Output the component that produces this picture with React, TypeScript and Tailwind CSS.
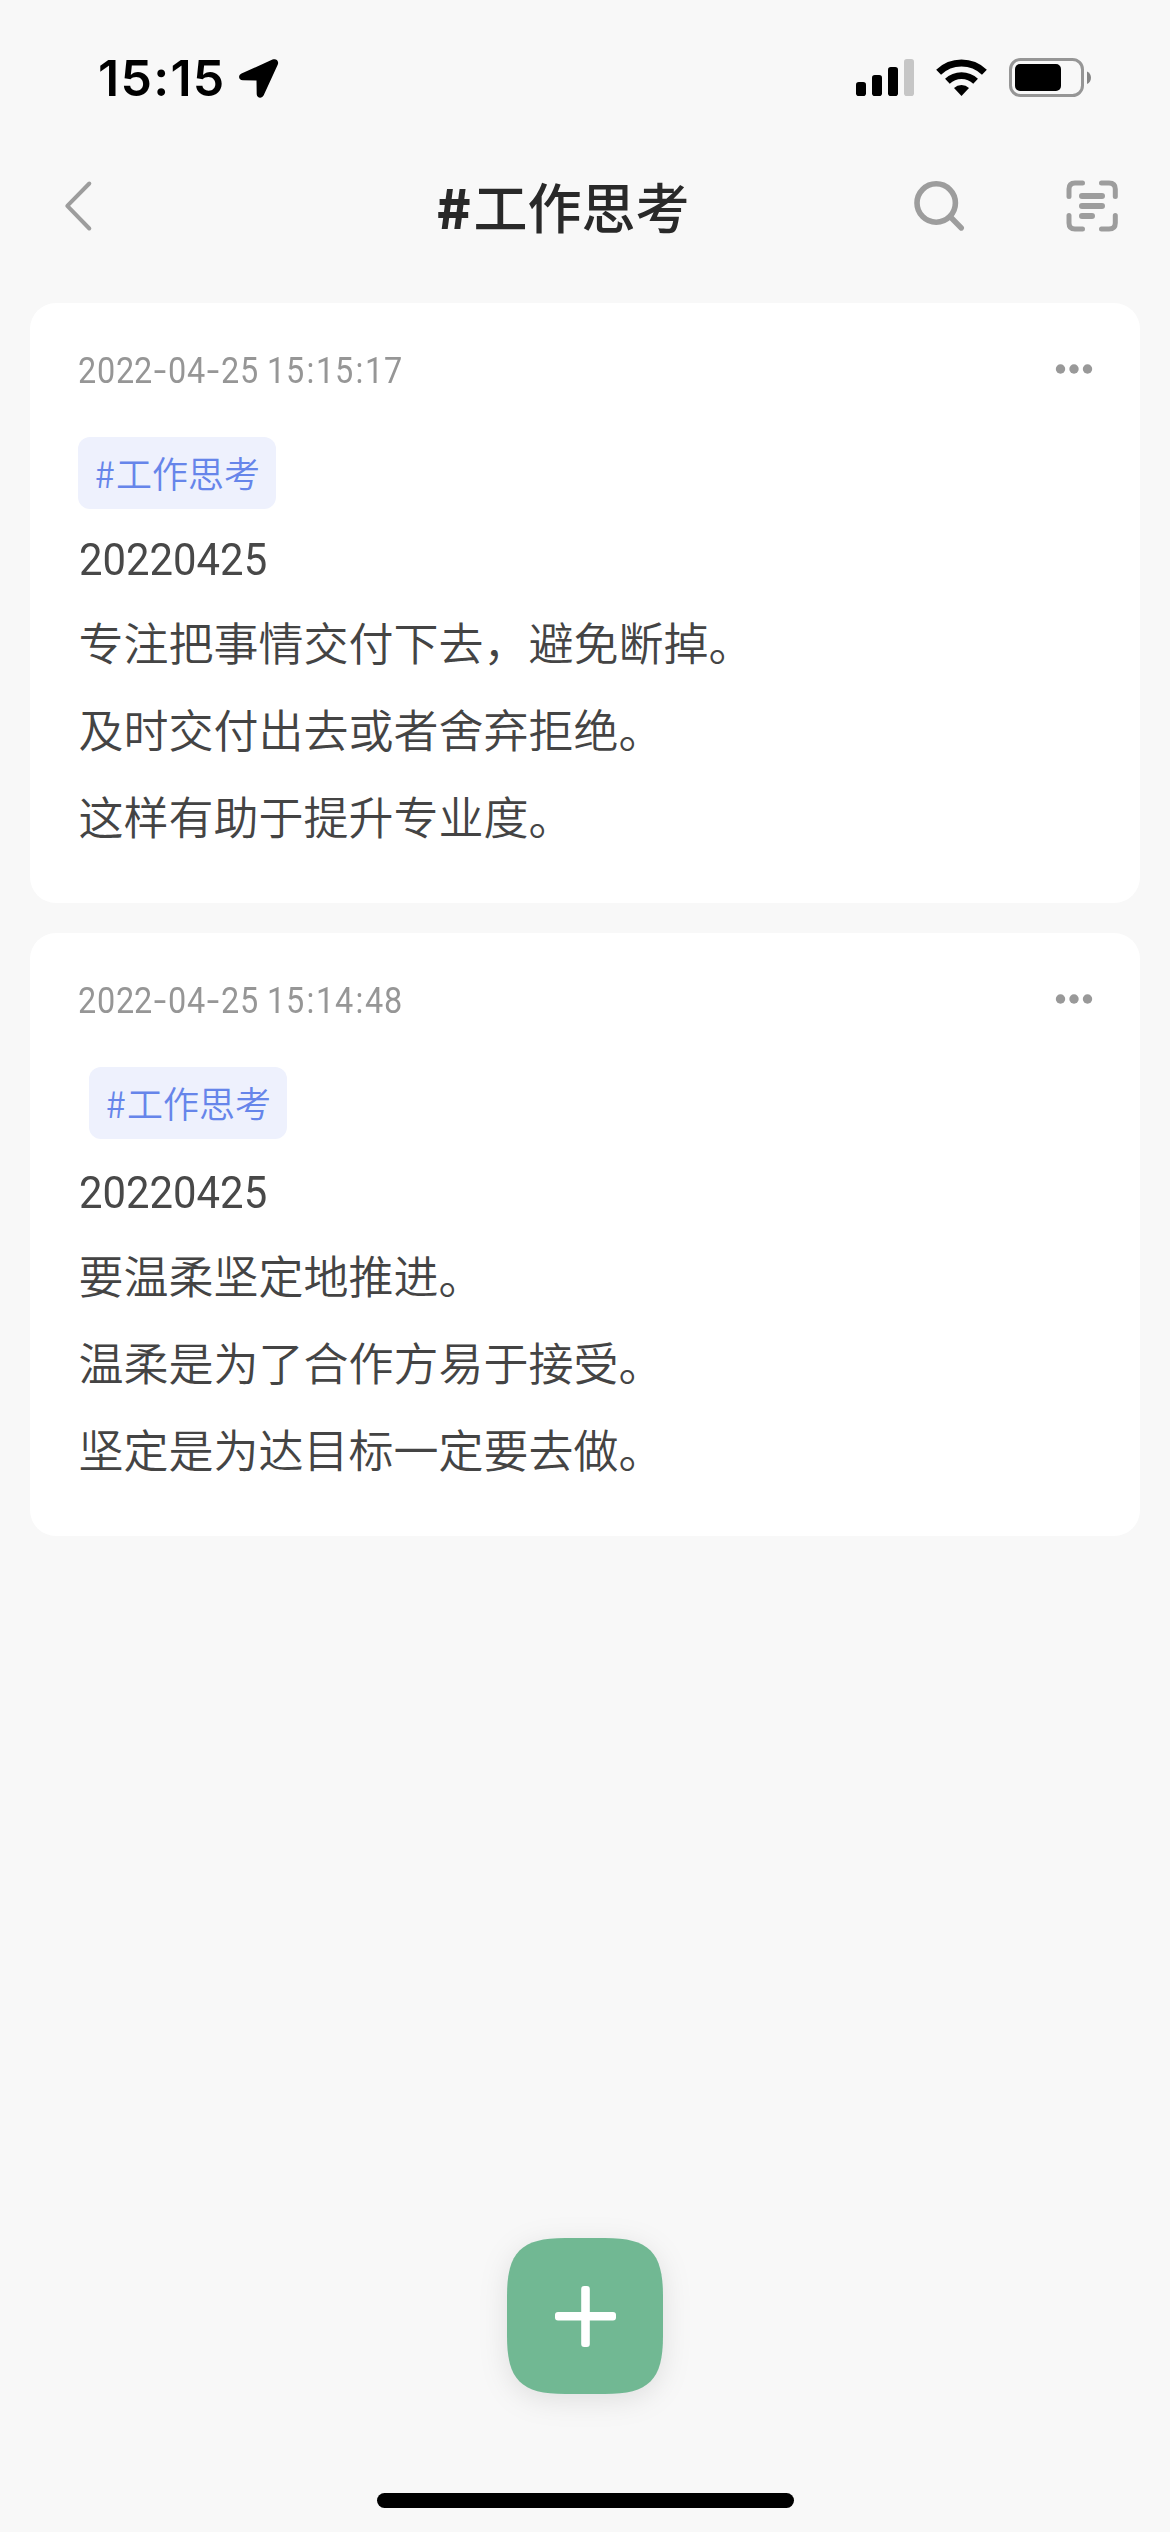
import React from "react";

const cjk = "font-['Noto_Sans_CJK_SC',sans-serif]";

function StatusBar() {
  return (
    <div className="flex h-[132px] items-start pl-[98px] pr-[78px]">
      <div className="mt-[48px] w-[140px] whitespace-nowrap font-['Inter',sans-serif] text-[50px] leading-[60px] font-semibold tracking-[1.3px] text-black">
        15:15
      </div>
      <svg className="mt-[58px] h-[42px] w-[42px] shrink-0" viewBox="237 58 42 42">
        <path
          d="M240.5 73.5 L271.5 59.6 C275.3 58 278.3 61 276.7 64.8 L262.7 95.3 C261 99 255.9 98.3 255.7 94.2 L255.5 80.5 L242 80.3 C237.5 80.1 236.7 75.3 240.5 73.5 Z"
          fill="#000"
        />
      </svg>
      <div className="grow" />
      <svg className="mt-[56px] h-[44px] w-[238px] shrink-0" viewBox="854 56 238 44">
        <rect x="856" y="82" width="10" height="14" rx="2.8" />
        <rect x="872" y="75" width="10" height="21" rx="2.8" />
        <rect x="888" y="67" width="10" height="29" rx="2.8" />
        <rect x="904" y="59" width="10" height="37" rx="2.8" fill="#c6c6c6" />
        <path d="M938.6 72.3 A33 33 0 0 1 984.4 72.3" fill="none" stroke="#000" strokeWidth="7" />
        <path d="M947.4 81.3 A20.5 20.5 0 0 1 975.6 81.3" fill="none" stroke="#000" strokeWidth="6.8" />
        <path d="M954 88 A11 11 0 0 1 969 88 L961.5 96 Z" />
        <rect x="1010.5" y="59.5" width="72" height="36" rx="10" fill="none" stroke="#969696" strokeWidth="3" />
        <rect x="1015" y="64" width="46" height="27" rx="5" />
        <path d="M1087 71.5 C1092.3 73.5 1092.3 82 1087 84 Z" fill="#858585" />
      </svg>
    </div>
  );
}

function Header() {
  return (
    <div className="flex h-[171px] items-start pl-[60px] pr-[48px]">
      <svg className="mt-[46px] h-[56px] w-[36px] shrink-0" viewBox="60 178 36 56">
        <path d="M89.3 183.5 L67.3 205.8 L89.3 228.5" fill="none" stroke="#9d9d9d" strokeWidth="4" strokeLinecap="round" strokeLinejoin="round" />
      </svg>
      <h1 className={`${cjk} ml-[340px] mt-[34px] flex w-[300px] whitespace-nowrap text-[54px] leading-[80px] font-medium text-[#292929]`}>
        <span className="w-[37px]"><span className="inline-block origin-left scale-x-[1.08] font-black">#</span></span>
        <span className="pl-[0.5px]">工作思考</span>
      </h1>
      <div className="grow" />
      <svg className="mt-[42px] h-[64px] w-[214px] shrink-0" viewBox="908 174 214 64" fill="none" stroke="#9d9d9d" strokeLinecap="round">
        <circle cx="936.2" cy="203" r="19.2" strokeWidth="5.6" />
        <path d="M951.5 218 L961.3 228" strokeWidth="5.4" />
        <g strokeWidth="5">
          <path d="M1069 196.5 V189 Q1069 183 1075 183 H1082.5" />
          <path d="M1101.5 183 H1109 Q1115.3 183 1115.3 189 V196.5" />
          <path d="M1115.3 215.5 V223 Q1115.3 229 1109 229 H1101.5" />
          <path d="M1082.5 229 H1075 Q1069 229 1069 223 V215.5" />
        </g>
        <path d="M1082 196 H1102 M1082 206 H1102 M1082 216 H1092" strokeWidth="6" />
      </svg>
    </div>
  );
}

function Digits({ children }: { children: string }) {
  return <span className="inline-block origin-left scale-x-[0.93]">{children}</span>;
}

const slotWidth: Record<string, string> = {
  "-": "w-[15.4px]",
  ":": "w-[11.6px]",
  " ": "w-[8.9px]",
};

function Timestamp({ value }: { value: string }) {
  return (
    <div className="flex pt-px font-['Roboto',sans-serif] text-[36px] leading-[60px] font-normal text-[#969696]">
      {value.split("").map((c, i) => (
        <span key={i} className={`${slotWidth[c] ?? "w-[18.7px]"} flex justify-center whitespace-pre`}>
          <span className={c === "-" ? "scale-x-[1.25]" : "scale-x-[0.9]"}>{c}</span>
        </span>
      ))}
    </div>
  );
}

type Note = { time: string; lines: string[]; indented?: boolean };

function Card({ note }: { note: Note }) {
  return (
    <article className={`${note.indented ? "h-[603px]" : "h-[600px]"} rounded-[26px] bg-white pl-[48px] pr-[47px] pt-[37px]`}>
      <div className="flex h-[60px] items-center justify-between">
        <Timestamp value={note.time} />
        <svg className="h-[12px] w-[38px]" viewBox="0 0 38 12" fill="#999">
          <circle cx="5.5" cy="5" r="4.7" />
          <circle cx="19" cy="5" r="4.7" />
          <circle cx="32.5" cy="5" r="4.7" />
        </svg>
      </div>
      <div className={`${cjk} ${note.indented ? "ml-[11px] mb-[12px]" : "mb-[9px]"} mt-[37px] flex h-[72px] w-[198px] items-start rounded-[12px] bg-[#eef1fd] pl-[17px] text-[36px] leading-[71px] font-[350] text-[#6685ea]`}>
        <span className="w-[21px]">#</span>
        <span className="whitespace-nowrap">工作思考</span>
      </div>
      <div className="h-[80px] pl-px font-['Roboto',sans-serif] text-[45px] leading-[84px] font-normal text-[#484848]">
        <Digits>20220425</Digits>
      </div>
      {note.lines.map((l) => (
        <p key={l} className={`${cjk} h-[87px] whitespace-nowrap pl-[0.5px] text-[45px] leading-[87px] font-[350] text-[#444]`}>
          {l}
        </p>
      ))}
    </article>
  );
}

const notes: Note[] = [
  {
    time: "2022-04-25 15:15:17",
    lines: ["专注把事情交付下去，避免断掉。", "及时交付出去或者舍弃拒绝。", "这样有助于提升专业度。"],
  },
  {
    time: "2022-04-25 15:14:48",
    lines: ["要温柔坚定地推进。", "温柔是为了合作方易于接受。", "坚定是为达目标一定要去做。"],
    indented: true,
  },
];

export default function App() {
  return (
    <div className="flex h-[2532px] w-[1170px] flex-col overflow-hidden bg-[#f8f8f8]">
      <StatusBar />
      <Header />
      <main className="flex grow flex-col gap-[30px] px-[30px]">
        {notes.map((n) => (
          <Card key={n.time} note={n} />
        ))}
      </main>
      <footer className="flex h-[294px] flex-col items-center">
        <svg className="h-[156px] w-[156px] shrink-0 overflow-visible drop-shadow-[0_6px_14px_rgba(0,0,0,0.1)]" viewBox="0 0 156 156">
          <path d="M0 58 C0 14 14 0 58 0 H98 C142 0 156 14 156 58 V98 C156 142 142 156 98 156 H58 C14 156 0 142 0 98 Z" fill="#71b893" />
          <rect x="48" y="74" width="61" height="8.6" rx="3" fill="#fff" />
          <rect x="74.2" y="48" width="8.6" height="61" rx="3" fill="#fff" />
        </svg>
        <div className="ml-px mt-[99px] h-[15px] w-[417px] rounded-full bg-black" />
      </footer>
    </div>
  );
}
